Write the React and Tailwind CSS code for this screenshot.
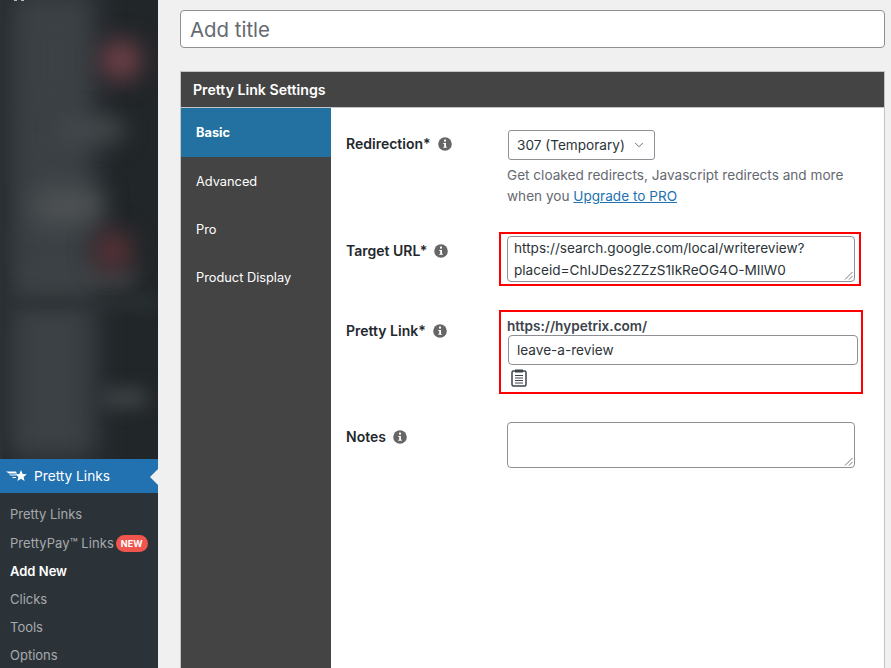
import { useState } from 'react';
import { ChevronDown } from 'lucide-react';

const font = 'font-["Inter","Liberation_Sans",sans-serif]';

const InfoDot = () => (
  <svg width="14" height="14" viewBox="0 0 14 14" className="shrink-0">
    <circle cx="7" cy="7" r="6.8" fill="#666" />
    <rect x="6" y="2.6" width="2" height="2" fill="#fff" />
    <path d="M5.3 6h2.7v3.7h.8v1H5.3v-1h.9V7h-.9z" fill="#fff" />
  </svg>
);

const Resize = () => (
  <svg width="9" height="9" viewBox="0 0 9 9" className="absolute right-[1px] bottom-[1px]">
    <path d="M8.5 1 1 8.5M8.5 5 5 8.5" stroke="#555" strokeWidth="0.8" />
  </svg>
);

const Label = ({ children }) => (
  <div className="flex items-center gap-[7px] text-[14px] leading-[20px] font-semibold text-[#23282d]">
    {children}
    <InfoDot />
  </div>
);

const Sidebar = () => (
  <div className="w-[158px] shrink-0 h-[668px] bg-[#2c3338] flex flex-col overflow-hidden">
    <div className="h-[459px] shrink-0 relative overflow-hidden bg-[#212629]">
      <div className="absolute left-[8px] top-[-10px] w-[88px] h-[470px] bg-[#3b4145] blur-[14px]" />
      <div className="absolute left-[40px] top-[15px] w-[35px] h-[90px] bg-[#3b4145] blur-[12px]" />
      <div className="absolute left-[60px] top-[118px] w-[65px] h-[24px] rounded-full bg-[#44494c] blur-[11px]" />
      <div className="absolute left-[32px] top-[188px] w-[72px] h-[36px] rounded-full bg-[#4d5153] blur-[12px]" />
      <div className="absolute left-[30px] top-[268px] w-[105px] h-[22px] bg-[#3d4245] blur-[10px]" />
      <div className="absolute left-[-10px] top-[296px] w-[170px] h-[14px] bg-[#2b3033] blur-[8px]" />
      <div className="absolute left-[101px] top-[40px] w-[40px] h-[40px] rounded-full bg-[#74414a] blur-[12px]" />
      <div className="absolute left-[94px] top-[230px] w-[38px] h-[42px] rounded-full bg-[#573237] blur-[12px]" />
      <div className="absolute left-[100px] top-[388px] w-[48px] h-[20px] rounded-full bg-[#3e4346] blur-[9px]" />
      <div className="absolute left-0 top-0 w-[3px] h-[459px] bg-[#2a3034]" />
      <div className="absolute left-[14px] top-0 w-[3px] h-[1px] bg-[#bbb]" />
      <div className="absolute left-[21px] top-0 w-[3px] h-[1px] bg-[#bbb]" />
    </div>
    <div className="h-[34px] shrink-0 bg-[#2271b1] relative flex items-center pl-[6px] gap-[7px] text-white text-[13.7px]">
      <svg width="21" height="12" viewBox="0 0 21 12">
        <path d="M0 1.5h10l1 2H3zM3 4.5h7v1H4.5zM6 7h4v1H7z" fill="#fff" />
        <path d="m15 0 1.6 3.9 4.2.3-3.2 2.7 1 4.1L15 8.8 11.4 11l1-4.1-3.2-2.7 4.2-.3z" fill="#fff" />
      </svg>
      <span>Pretty Links</span>
      <div className="absolute right-0 top-[10px] border-y-[8px] border-y-transparent border-r-[8px] border-r-[#f0f0f1]" />
    </div>
    <div className="flex flex-col pt-[7px] pl-[10px] text-[13px] leading-[28px] text-[#a7aaad]">
      <div>Pretty Links</div>
      <div className="flex items-center gap-[2px] h-[29px] pt-[1px]">
        <span className="tracking-[0.06px]">PrettyPay™ Links</span>
        <span className="h-[17px] px-[5px] rounded-full bg-[#f0564e] text-white text-[9px] leading-[17px] font-bold">NEW</span>
      </div>
      <div className="font-semibold text-white">Add New</div>
      <div>Clicks</div>
      <div>Tools</div>
      <div>Options</div>
    </div>
  </div>
);

export default function App() {
  const [tab] = useState('Basic');
  const tabs = ['Basic', 'Advanced', 'Pro', 'Product Display'];

  return (
    <div className={`flex w-[891px] h-[668px] overflow-hidden bg-[#f0f0f1] ${font}`}>
      <Sidebar />
      <div className="flex-1 pt-[10px] pl-[22px] pr-[6px]">
        <div className="h-[38px] bg-white border border-[#8c8f94] rounded-[4px] px-[9px] pt-[2px] flex items-center text-[20.4px] text-[#646970]">
          Add title
        </div>
        <div className="mt-[23px] border border-[#c3c4c7] h-[600px] bg-white flex flex-col">
          <div className="h-[36px] shrink-0 bg-[#444] border-b border-[#c3c4c7] px-[12px] flex items-center text-[14.15px] font-semibold text-white">
            Pretty Link Settings
          </div>
          <div className="flex flex-1">
            <div className="w-[150px] shrink-0 bg-[#444] flex flex-col text-[12.8px] text-white">
              {tabs.map((t) => (
                <div
                  key={t}
                  className={`px-[15px] flex items-center ${t === tab ? 'h-[49px] bg-[#2271a1] font-bold' : 'h-[48px] pt-[2px]'}`}
                >
                  {t}
                </div>
              ))}
            </div>
            <div className="flex-1 pl-[15px] pt-[22px] text-[13.6px] text-[#2c3338]">
              <div className="flex">
                <div className="w-[162px] pt-[4px]"><Label>Redirection*</Label></div>
                <div>
                  <div className="w-[147px] h-[30px] border border-[#8c8f94] rounded-[3px] pl-[8px] pr-[8px] flex items-center justify-between">
                    307 (Temporary)
                    <ChevronDown size={14} strokeWidth={1.5} className="text-[#50575e]" />
                  </div>
                  <div className="w-[350px] mt-[5px] -ml-[1px] leading-[21px] text-[#646970]">
                    Get cloaked redirects, Javascript redirects and more<br />
                    when you <a className="text-[#2271b1] underline">Upgrade to PRO</a>
                  </div>
                </div>
              </div>

              <div className="flex mt-[25px]">
                <div className="w-[153px] pt-[9px]"><Label>Target URL*</Label></div>
                <div className="w-[362px] h-[54px] border-2 border-[#f00] pt-[2px] pl-[6px]">
                  <div className="relative w-[348px] h-[46px] border border-[#8c8f94] rounded-[4px] px-[6px] text-[13.6px] leading-[22px] bg-white">
                    https://search.google.com/local/writereview?<br />
                    placeid=ChIJDes2ZZzS1IkReOG4O-MIlW0
                    <Resize />
                  </div>
                </div>
              </div>

              <div className="flex mt-[24px]">
                <div className="w-[153px] pt-[11px]"><Label>Pretty Link*</Label></div>
                <div className="w-[364px] h-[84px] border-2 border-[#f00] pl-[6px] pt-[6px]">
                  <div className="leading-[17px] font-semibold text-[#3c434a]">https://hypetrix.com/</div>
                  <div className="w-[350px] h-[30px] ml-[1px] border border-[#8c8f94] rounded-[4px] px-[8px] flex items-center">leave-a-review</div>
                  <svg width="16" height="18" viewBox="0 0 16 18" className="ml-[4px] mt-[4px]">
                    <rect x="1" y="2" width="14" height="15" rx="1.5" fill="none" stroke="#3c434a" strokeWidth="1.5" />
                    <rect x="4" y="0.5" width="8" height="3" fill="#3c434a" />
                    <path d="M4 6.5h8M4 9h8M4 11.5h8M4 14h8" stroke="#3c434a" strokeWidth="1" />
                  </svg>
                </div>
              </div>

              <div className="flex mt-[28px]">
                <div className="w-[161px] pt-[5px]"><Label>Notes</Label></div>
                <div className="relative w-[348px] h-[46px] border border-[#8c8f94] rounded-[4px] bg-white">
                  <Resize />
                </div>
              </div>
            </div>
          </div>
        </div>
      </div>
    </div>
  );
}
